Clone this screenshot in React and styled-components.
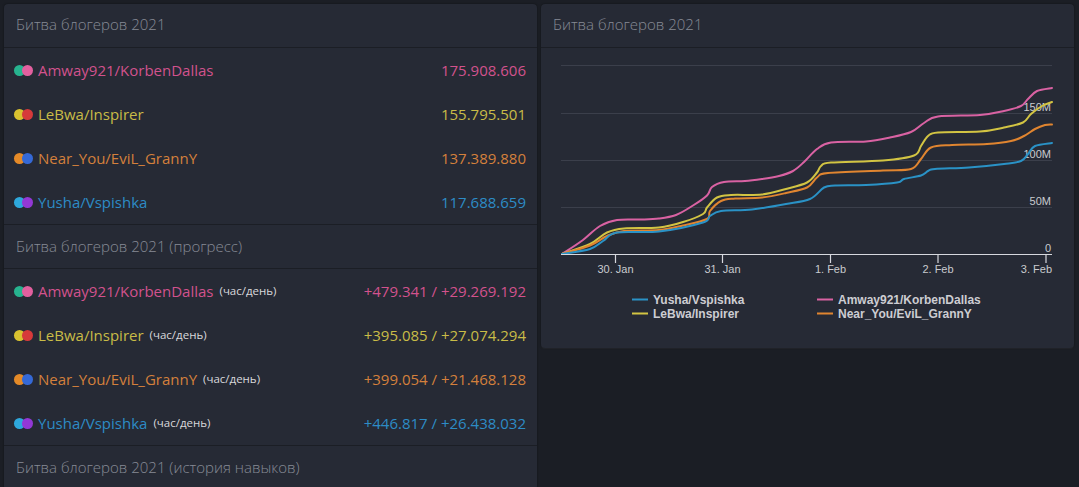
import React from "react";
import styled, { createGlobalStyle } from "styled-components";

const Global = createGlobalStyle`
  html, body { margin: 0; padding: 0; background: #1b1e25; overflow: hidden; }
  body { font-family: "Open Sans", "Noto Sans", sans-serif; }
`;

const Page = styled.div`
  display: grid;
  grid-template-columns: 533px 533px;
  gap: 4px;
  padding: 4px;
  align-items: start;
`;

const Card = styled.div`
  background: #262a35;
  border-radius: 4px;
  box-shadow: 0 1px 0 rgba(255,255,255,0.04), 0 0 2px rgba(0,0,0,0.5);
  overflow: hidden;
`;

const Header = styled.div`
  height: 44px;
  box-sizing: border-box;
  display: flex;
  align-items: center;
  padding: 0 0 ${(p) => (p.$first ? 4 : 2)}px 12px;
  border-bottom: 1px solid #1b1e25;
  color: #878b95;
  font-size: 15px;
  font-weight: 300;
`;

const Section = styled.section`
  & + & { border-top: 1px solid #1b1e25; }
`;

const Row = styled.div`
  height: 44px;
  box-sizing: border-box;
  display: flex;
  align-items: center;
  padding: 0 11px 1px 10px;
  font-size: 15px;
  color: ${(p) => p.$color};
`;

const Dots = styled.span`
  position: relative;
  width: 19px;
  height: 11px;
  margin: 2px 5px 0 0;
  flex: none;
`;

const Dot = styled.span`
  position: absolute;
  top: 0;
  left: ${(p) => p.$left}px;
  width: 11px;
  height: 11px;
  border-radius: 50%;
  background: ${(p) => p.$color};
`;

const Name = styled.span`
  white-space: nowrap;
`;

const Unit = styled.span`
  margin-left: 6px;
  font-size: 11.5px;
  color: #d8d8dc;
`;

const Value = styled.span`
  margin-left: auto;
  white-space: nowrap;
`;

const ChartBody = styled.div`
  height: 300px;
`;

const ChartSvg = styled.svg`
  display: block;
  width: 533px;
  height: 300px;
`;

const players = [
  { name: "Amway921/KorbenDallas", color: "#d2528d", dots: ["#27b38f", "#e2609f"], total: "175.908.606", prog: "+479.341 / +29.269.192" },
  { name: "LeBwa/Inspirer", color: "#c9bc47", dots: ["#d9c230", "#d63a3a"], total: "155.795.501", prog: "+395.085 / +27.074.294" },
  { name: "Near_You/EviL_GrannY", color: "#d4803c", dots: ["#e48a28", "#3569d6"], total: "137.389.880", prog: "+399.054 / +21.468.128" },
  { name: "Yusha/Vspishka", color: "#2d8cc6", dots: ["#2ea8dc", "#9338d6"], total: "117.688.659", prog: "+446.817 / +26.438.032" },
];

const series = [
  {
    name: "Amway921/KorbenDallas",
    color: "#d962a3",
    pts: [[562,255],[583,241],[600,227],[617,221],[641,220.5],[659,219.5],[676,216],[693,206.5],[707,196.5],[712,188],[724,183],[745,182],[762,180],[779,177],[793,172],[804,163],[817,150],[831,143.5],[866,142.5],[890,138.5],[911,133],[924,124],[938,117.5],[980,116],[1004,112],[1021,107],[1028,100],[1037,92],[1052,89]],
  },
  {
    name: "LeBwa/Inspirer",
    color: "#d2c443",
    pts: [[562,255],[590,245],[607,233.5],[624,229.5],[659,228.5],[683,223],[703,215],[707,208.5],[717,198.5],[731,196],[762,195.5],[786,190],[807,183.5],[817,173.5],[821,167],[831,163.5],[883,161.5],[914,156.5],[921,147],[928,137],[938,133.5],[980,132.5],[1004,128.5],[1023,123.5],[1031,115],[1042,107],[1052,103]],
  },
  {
    name: "Near_You/EviL_GrannY",
    color: "#e08530",
    pts: [[562,255],[590,246.5],[607,237],[624,232],[659,231],[683,226.5],[707,220],[710,212],[721,202],[735,199.5],[762,198.5],[786,194],[807,188.5],[817,178.5],[828,174],[883,171.5],[911,170],[921,160],[931,148.5],[952,146],[987,145],[1011,142],[1024,137],[1035,130],[1045,126],[1052,125.5]],
  },
  {
    name: "Yusha/Vspishka",
    color: "#2a92c6",
    pts: [[562,255],[590,250],[603,242],[617,233.5],[659,232.5],[703,223.5],[710,217],[721,212],[752,210.5],[786,205],[810,200],[824,188.5],[835,186.5],[866,186],[897,183.5],[904,180],[921,176.5],[928,172],[935,170],[969,168.5],[1004,165],[1021,162],[1028,155],[1035,147],[1052,144]],
  },
];

function smoothPath(pts) {
  let d = `M${pts[0][0]},${pts[0][1]}`;
  for (let i = 0; i < pts.length - 1; i++) {
    const p0 = pts[i - 1] || pts[i];
    const p1 = pts[i];
    const p2 = pts[i + 1];
    const p3 = pts[i + 2] || p2;
    const c1x = p1[0] + (p2[0] - p0[0]) / 6;
    const c1y = p1[1] + (p2[1] - p0[1]) / 6;
    const c2x = p2[0] - (p3[0] - p1[0]) / 6;
    const c2y = p2[1] - (p3[1] - p1[1]) / 6;
    d += ` C${c1x.toFixed(1)},${c1y.toFixed(1)} ${c2x.toFixed(1)},${c2y.toFixed(1)} ${p2[0]},${p2[1]}`;
  }
  return d;
}

const gridY = [66, 114, 161, 208];
const yLabels = [
  { y: 112, t: "150M" },
  { y: 159, t: "100M" },
  { y: 206, t: "50M" },
  { y: 253, t: "0" },
];
const xTicks = [
  { x: 615.5, t: "30. Jan" },
  { x: 722.5, t: "31. Jan" },
  { x: 830.5, t: "1. Feb" },
  { x: 938, t: "2. Feb" },
  { x: 1046, t: "3. Feb", anchorEnd: true },
];
const legend = [
  { x: 632, y: 300.5, s: series[3] },
  { x: 817, y: 300.5, s: series[0] },
  { x: 632, y: 314.5, s: series[1] },
  { x: 817, y: 314.5, s: series[2] },
];

const axisFont = "'Liberation Sans', Arial, sans-serif";

function Chart() {
  return (
    <ChartSvg viewBox="541 49 533 300">
      {gridY.map((y) => (
        <line key={y} x1="561" x2="1052" y1={y + 0.5} y2={y + 0.5} stroke="#3b3f4b" strokeWidth="1" />
      ))}
      {yLabels.map((l) => (
        <text key={l.t} x="1051" y={l.y} textAnchor="end" fill="#c9cacf" fontSize="11" fontFamily={axisFont}>
          {l.t}
        </text>
      ))}
      {series.map((s) => (
        <path key={s.name} d={smoothPath(s.pts)} fill="none" stroke={s.color} strokeWidth="2" strokeLinejoin="round" strokeLinecap="round" />
      ))}
      <line x1="561" x2="1052" y1="255.5" y2="255.5" stroke="#d6d8de" strokeWidth="1.2" />
      {xTicks.map((t) => (
        <g key={t.t}>
          <line x1={t.x} x2={t.x} y1="256" y2="264" stroke="#d6d8de" strokeWidth="1.2" />
          <text
            x={t.anchorEnd ? 1052 : t.x}
            y="274"
            textAnchor={t.anchorEnd ? "end" : "middle"}
            fill="#c9cacf"
            fontSize="11"
            fontFamily={axisFont}
          >
            {t.t}
          </text>
        </g>
      ))}
      {legend.map((l) => (
        <g key={l.s.name}>
          <line x1={l.x} x2={l.x + 16} y1={l.y} y2={l.y} stroke={l.s.color} strokeWidth="2" />
          <text x={l.x + 21} y={l.y + 4} fill="#cdcdd2" fontSize="12" fontWeight="bold" fontFamily={axisFont}>
            {l.s.name}
          </text>
        </g>
      ))}
    </ChartSvg>
  );
}

function PlayerRow({ p, value, unit }) {
  return (
    <Row $color={p.color}>
      <Dots>
        <Dot $left={0} $color={p.dots[0]} />
        <Dot $left={8} $color={p.dots[1]} />
      </Dots>
      <Name>{p.name}</Name>
      {unit && <Unit>(час/день)</Unit>}
      <Value>{value}</Value>
    </Row>
  );
}

export default function App() {
  return (
    <>
      <Global />
      <Page>
        <Card>
          <Section>
            <Header $first>Битва блогеров 2021</Header>
            {players.map((p) => (
              <PlayerRow key={p.name} p={p} value={p.total} />
            ))}
          </Section>
          <Section>
            <Header>Битва блогеров 2021 (прогресс)</Header>
            {players.map((p) => (
              <PlayerRow key={p.name} p={p} value={p.prog} unit />
            ))}
          </Section>
          <Section>
            <Header>Битва блогеров 2021 (история навыков)</Header>
          </Section>
        </Card>
        <Card>
          <Header $first>Битва блогеров 2021</Header>
          <ChartBody>
            <Chart />
          </ChartBody>
        </Card>
      </Page>
    </>
  );
}
